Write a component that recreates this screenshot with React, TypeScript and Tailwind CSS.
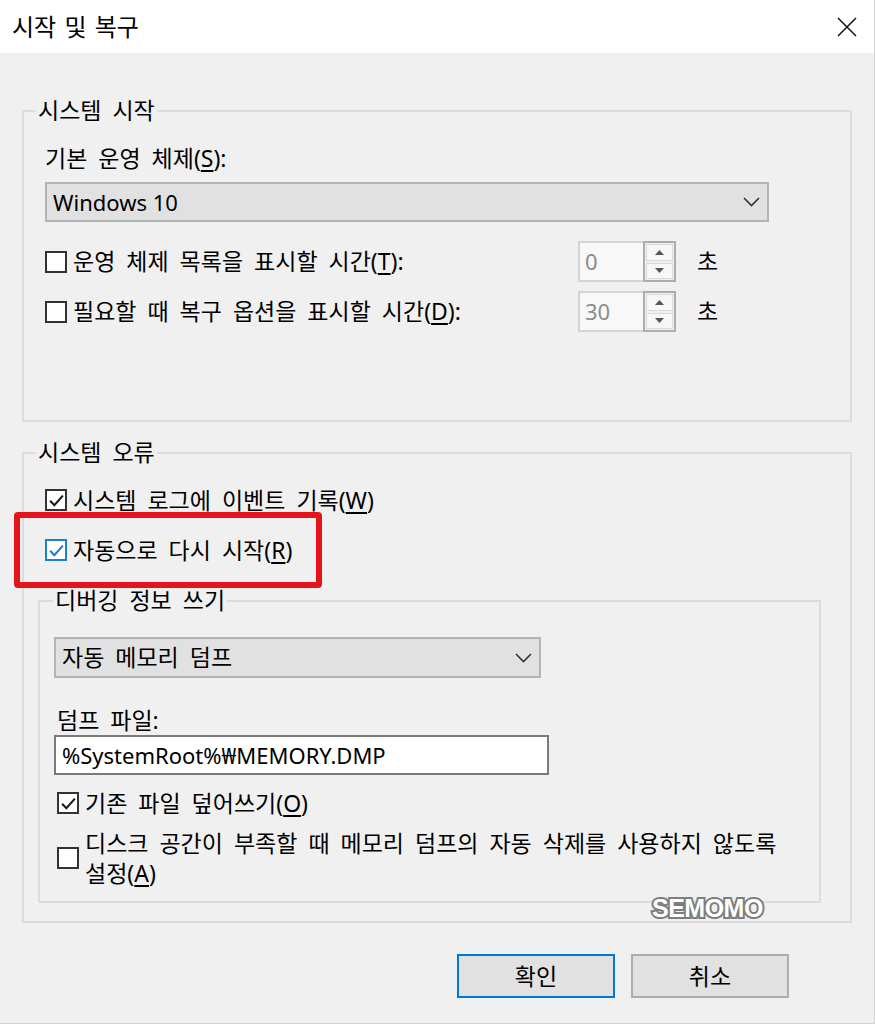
const fontStack = "font-['Noto_Sans','Noto_Sans_CJK_KR',sans-serif]"

function Mn({ children }: { children: string }) {
  return <span className="underline underline-offset-[3px]">{children}</span>
}

function CheckBox({ checked = false, focused = false }: { checked?: boolean; focused?: boolean }) {
  return (
    <span
      className={`flex h-[22px] w-[22px] shrink-0 items-center justify-center border-2 bg-white ${
        focused ? "border-[#1e7fd0]" : "border-[#333333]"
      }`}
    >
      {checked ? (
        <svg viewBox="0 0 16 16" className="h-[17px] w-[17px]">
          <path
            d="M2 8.2 L6 12.4 L14 3.4"
            fill="none"
            stroke={focused ? "#1e7fd0" : "#1a1a1a"}
            strokeWidth="2"
          />
        </svg>
      ) : null}
    </span>
  )
}

function Chevron() {
  return (
    <svg viewBox="0 0 17 10" className="h-[10px] w-[17px]">
      <path d="M1 1 L8.5 8.5 L16 1" fill="none" stroke="#333333" strokeWidth="1.6" />
    </svg>
  )
}

function Triangle({ up }: { up: boolean }) {
  return (
    <svg viewBox="0 0 9 5" className="h-[5px] w-[9px]">
      <path d={up ? "M0 5 L4.5 0 L9 5 Z" : "M0 0 L4.5 5 L9 0 Z"} fill="#555555" />
    </svg>
  )
}

function Spinner({ value }: { value: string }) {
  return (
    <div className="flex h-[41px] w-[98px] shrink-0">
      <div className="flex flex-1 items-center border-2 border-r-0 border-[#d4d4d4] bg-[#f8f8f8] pl-[5px] text-[22px] text-[#8c8c8c]">
        {value}
      </div>
      <div className="flex w-[33px] flex-col gap-[2px] border-2 border-[#adadad] bg-[#f0f0f0] p-[1px]">
        <div className="flex flex-1 items-center justify-center border border-[#dadada] bg-[#f7f7f7]">
          <Triangle up />
        </div>
        <div className="flex flex-1 items-center justify-center border border-[#dadada] bg-[#f7f7f7]">
          <Triangle up={false} />
        </div>
      </div>
    </div>
  )
}

export default function App() {
  return (
    <div
      className={`relative flex h-[1024px] w-[875px] flex-col border-r border-b border-[#d2d2d2] bg-[#f0f0f0] text-[23px] text-black [word-spacing:5px] ${fontStack}`}
    >
      <header className="flex h-[53px] shrink-0 items-center justify-between bg-white pr-[17px] pl-[12px]">
        <h1 className="text-[24px] leading-none font-normal [word-spacing:2px]">시작 및 복구</h1>
        <svg viewBox="0 0 20 20" className="h-[20px] w-[20px]">
          <path d="M1 1 L19 19 M19 1 L1 19" stroke="#111111" strokeWidth="1.5" />
        </svg>
      </header>

      <div className="flex flex-1 flex-col pt-[57px] pr-[22px] pl-[22px]">
        {/* 시스템 시작 */}
        <section className="border-2 border-[#dcdcdc]">
          <div className="-mt-[16px] ml-[12px] w-fit bg-[#f0f0f0] px-[2px] leading-[28px]">시스템 시작</div>
          <div className="pt-[20px] pb-[88px] pl-[21px]">
            <p className="leading-[28px]">
              기본 운영 체제(<Mn>S</Mn>):
            </p>
            <div className="mt-[10px] flex h-[40px] w-[724px] items-center justify-between border-2 border-[#b4b4b4] bg-[#e1e1e1] pr-[7px] pl-[6px]">
              <span className="text-[22px] [word-spacing:normal]">Windows 10</span>
              <Chevron />
            </div>
            <div className="mt-[19px] flex items-center">
              <div className="flex w-[533px] items-center gap-[6px]">
                <CheckBox />
                <span>
                  운영 체제 목록을 표시할 시간(<Mn>T</Mn>):
                </span>
              </div>
              <Spinner value="0" />
              <span className="ml-[21px]">초</span>
            </div>
            <div className="mt-[9px] flex items-center">
              <div className="flex w-[533px] items-center gap-[6px]">
                <CheckBox />
                <span>
                  필요할 때 복구 옵션을 표시할 시간(<Mn>D</Mn>):
                </span>
              </div>
              <Spinner value="30" />
              <span className="ml-[21px]">초</span>
            </div>
          </div>
        </section>

        {/* 시스템 오류 */}
        <section className="mt-[30px] border-2 border-[#dcdcdc]">
          <div className="-mt-[16px] ml-[12px] w-fit bg-[#f0f0f0] px-[2px] leading-[28px]">시스템 오류</div>
          <div className="pt-[19px] pb-[18px] pl-[14px]">
            <div className="ml-[7px] flex h-[30px] items-center gap-[6px]">
              <CheckBox checked />
              <span>
                시스템 로그에 이벤트 기록(<Mn>W</Mn>)
              </span>
            </div>
            <div className="relative mt-[20px] ml-[7px] flex h-[30px] items-center gap-[6px]">
              <CheckBox checked focused />
              <span>
                자동으로 다시 시작(<Mn>R</Mn>)
              </span>
              <div className="absolute -top-[23px] -left-[31px] h-[76px] w-[308px] rounded-[4px] border-[6px] border-[#e3141c]" />
            </div>

            {/* 디버깅 정보 쓰기 */}
            <div className="mt-[35px] w-[783px] border-2 border-[#dcdcdc]">
              <div className="-mt-[16px] ml-[13px] w-fit bg-[#f0f0f0] px-[2px] leading-[28px]">디버깅 정보 쓰기</div>
              <div className="pt-[23px] pb-[13px] pl-[14px]">
                <div className="flex h-[41px] w-[487px] items-center justify-between border-2 border-[#b4b4b4] bg-[#e1e1e1] pr-[7px] pl-[6px]">
                  <span>자동 메모리 덤프</span>
                  <Chevron />
                </div>
                <p className="mt-[28px] ml-[3px] leading-[28px]">덤프 파일:</p>
                <div className="mt-[1px] flex h-[40px] w-[495px] items-center border-2 border-[#7a7a7a] bg-white pl-[6px] text-[22px] [word-spacing:normal]">
                  %SystemRoot%₩MEMORY.DMP
                </div>
                <div className="mt-[13px] ml-[3px] flex h-[30px] items-center gap-[6px]">
                  <CheckBox checked />
                  <span>
                    기존 파일 덮어쓰기(<Mn>O</Mn>)
                  </span>
                </div>
                <div className="mt-[10px] ml-[3px] flex items-center gap-[6px]">
                  <CheckBox />
                  <span className="leading-[30px]">
                    디스크 공간이 부족할 때 메모리 덤프의 자동 삭제를 사용하지 않도록
                    <br />
                    설정(<Mn>A</Mn>)
                  </span>
                </div>
              </div>
            </div>
          </div>
        </section>

        <div className="mt-[31px] mr-[63px] flex justify-end gap-[16px]">
          <button className="h-[44px] w-[158px] border-2 border-[#0078d7] bg-[#e1e1e1]">확인</button>
          <button className="h-[44px] w-[158px] border-2 border-[#adadad] bg-[#e1e1e1]">취소</button>
        </div>
      </div>

      <div className="absolute top-[894px] left-[652px] font-['Liberation_Sans',sans-serif] text-[25px] leading-[28px] font-bold tracking-[-0.5px] text-white [paint-order:stroke_fill] [word-spacing:normal] [-webkit-text-stroke:4px_#7d7d7d]">
        SEMOMO
      </div>
    </div>
  )
}
